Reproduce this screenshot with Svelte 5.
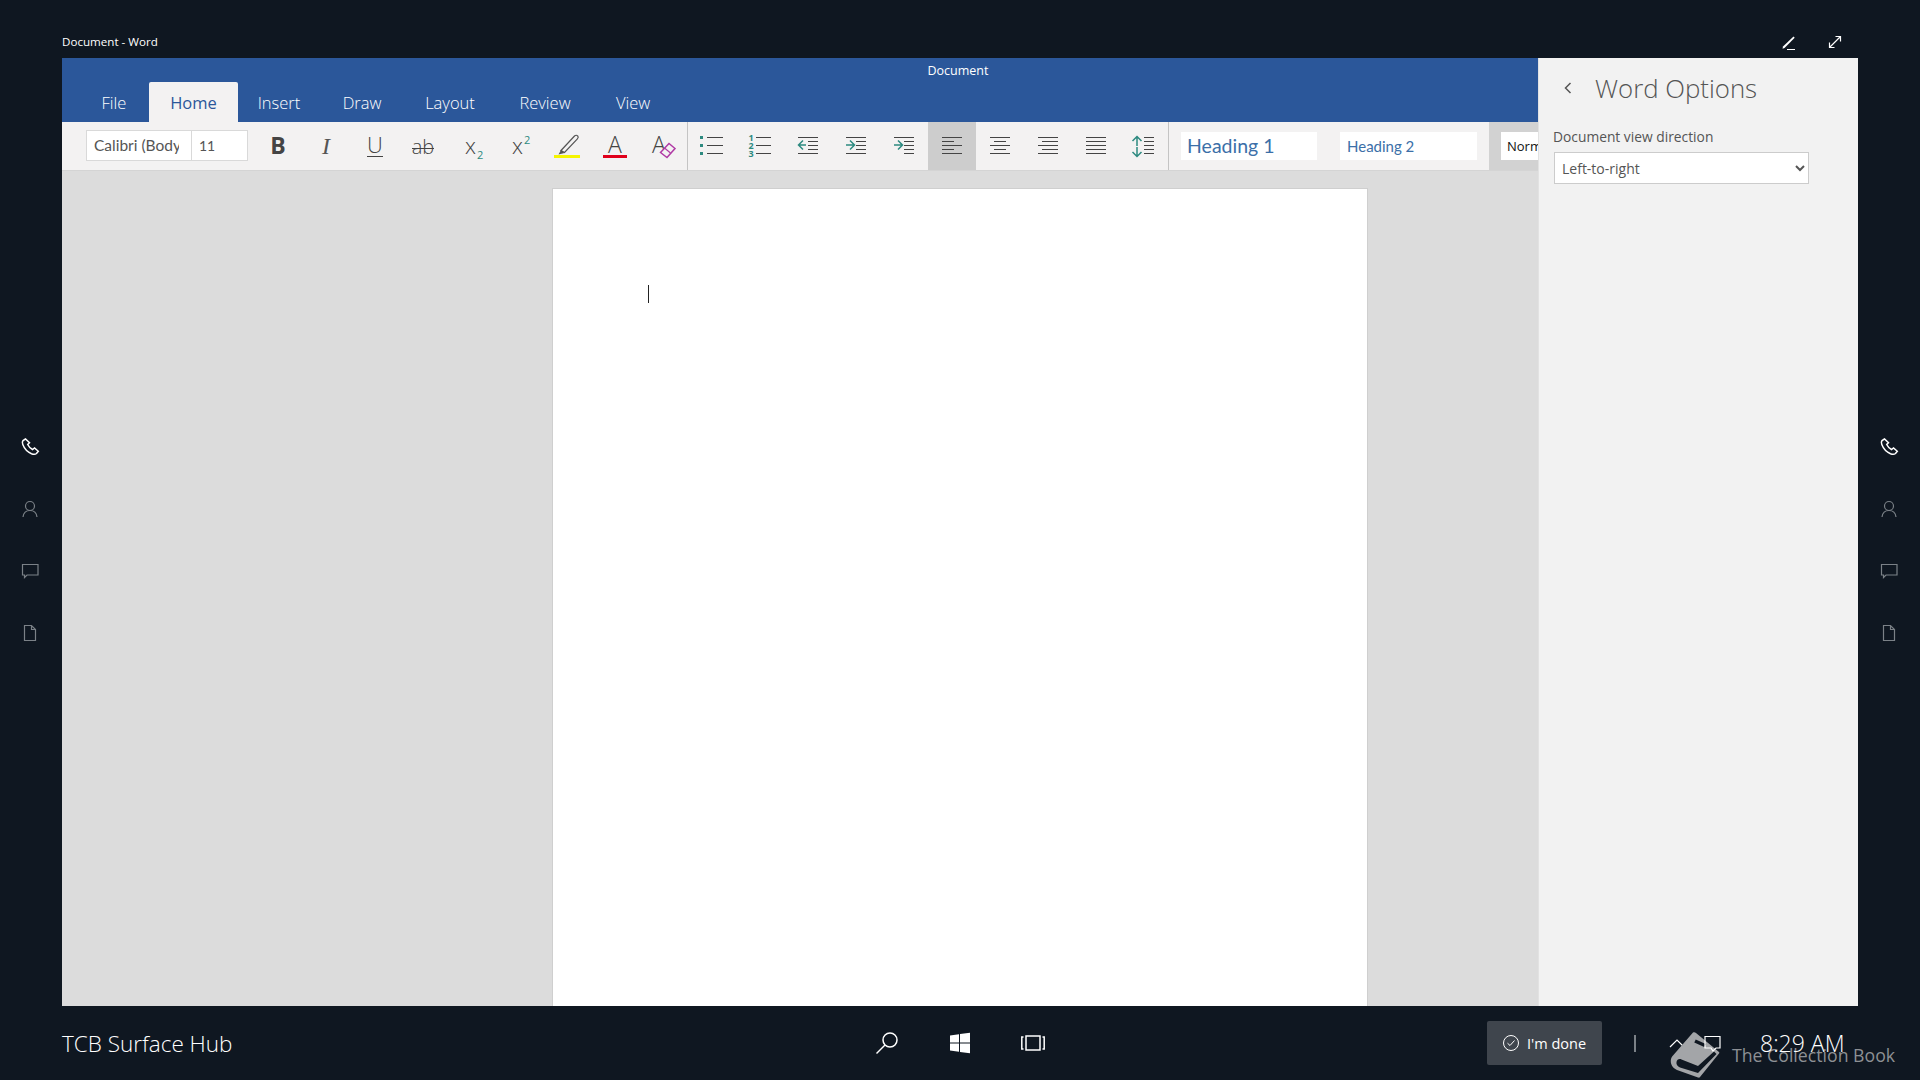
<script lang="ts">
	const tabs = [
		{ label: 'File', width: 64 },
		{ label: 'Home', width: 89 },
		{ label: 'Insert', width: 76 },
		{ label: 'Draw', width: 84 },
		{ label: 'Layout', width: 86 },
		{ label: 'Review', width: 98 },
		{ label: 'View', width: 72 }
	];
	const railIcons = ['phone', 'person', 'chat', 'doc'];

	// y rows of the five lines in paragraph icons, in a 48x48 cell
	const rows = [15, 19, 23, 27, 31];

	const paragraphIcons: { name: string; lines: number[][]; active?: boolean; marks?: string }[] = [
		{ name: 'outdent', lines: [[14, 34], [24, 34], [24, 34], [24, 34], [14, 34]], marks: 'M22 23H15M19 18.5 14.5 23l4.5 4.5' },
		{ name: 'indent', lines: [[14, 34], [24, 34], [24, 34], [24, 34], [14, 34]], marks: 'M14 23h8M18 18.5l4.5 4.5-4.5 4.5' },
		{ name: 'indent-more', lines: [[14, 34], [24, 34], [24, 34], [24, 34], [24, 34]], marks: 'M14 23h8M18 18.5l4.5 4.5-4.5 4.5' },
		{ name: 'left', active: true, lines: [[14, 34], [14, 26], [14, 34], [14, 26], [14, 34]] },
		{ name: 'center', lines: [[14, 34], [18, 30], [14, 34], [18, 30], [14, 34]] },
		{ name: 'right', lines: [[14, 34], [18, 34], [14, 34], [18, 34], [14, 34]] },
		{ name: 'justify', lines: [[14, 34], [14, 34], [14, 34], [14, 34], [14, 34]] }
	];
</script>

<div class="screen">
	<header class="topbar">
		<span class="doc-title">Document - Word</span>
		<div class="top-icons">
			<svg width="18" height="18" viewBox="0 0 18 18"><path d="M3 13.5 13.5 3.5l1.2 1.2L4.5 15l-2 .7z" fill="#fff" /><path d="M7 16.5h8" stroke="#fff" /></svg>
			<svg width="18" height="18" viewBox="0 0 18 18" fill="none" stroke="#fff" stroke-width="1.2"><path d="M3.5 14.5l11-11M9.5 3.5h5v5M3.5 9.5v5h5" /></svg>
		</div>
	</header>

	<div class="middle">
		{#snippet rail(side: string)}
			<nav class="rail {side}">
				{#each railIcons as icon}
					<svg class="rail-icon" class:on={icon === 'phone'} width="24" height="24" viewBox="0 0 24 24" fill="none" stroke="currentColor" stroke-width="1.2">
						{#if icon === 'phone'}
							<path d="M7.5 4 5 5.500c-.8 1-.8 2.500-.2 4 1.500 4 4.800 7.500 8.700 9.200 2 .8 3.800.8 5-.2l1.800-2.200-3.800-3.300-2 1.500c-2-1-3.800-3-4.800-5l1.800-1.800z" stroke-width="1.500" />
						{:else if icon === 'person'}
							<circle cx="12" cy="9" r="4.500" /><path d="M5 20c.5-4 3-6.500 7-6.500s6.500 2.500 7 6.500" />
						{:else if icon === 'chat'}
							<path d="M4.500 5.500h15.500v10.500H9l-2.500 2.500V16h-2z" />
						{:else}
							<path d="M6.500 4.500h7l4 4v11h-11zM13.500 4.500v4h4" />
						{/if}
					</svg>
				{/each}
			</nav>
		{/snippet}

		{@render rail('left')}

		<main class="window">
			<div class="app">
				<div class="ribbon">
					<div class="app-title">Document</div>
					<div class="tabs">
						{#each tabs as tab}
							<span class="tab" class:selected={tab.label === 'Home'} style="width: {tab.width}px">{tab.label}</span>
						{/each}
					</div>
				</div>

				<div class="toolbar">
					<div class="font-box">
						<span class="font-name"><span class="font-clip">Calibri (Body)</span></span>
						<span class="font-size">11</span>
					</div>

					<div class="tools">
						<svg class="cell" viewBox="0 0 48 48"><text class="t-bold" x="23" y="32" text-anchor="middle">B</text></svg>
						<svg class="cell" viewBox="0 0 48 48"><text class="t-italic" x="23" y="32" text-anchor="middle">I</text></svg>
						<svg class="cell" viewBox="0 0 48 48"><text class="t-plain" x="24" y="31" text-anchor="middle">U</text><path class="ln" d="M16 34.500h16" /></svg>
						<svg class="cell" viewBox="0 0 48 48"><text class="t-ab" x="24" y="32" text-anchor="middle">ab</text><path class="ln" d="M13 26.500h22" /></svg>
						<svg class="cell" viewBox="0 0 48 48"><text class="t-x" x="18" y="32">x</text><text class="t-sub" x="30" y="37">2</text></svg>
						<svg class="cell" viewBox="0 0 48 48"><text class="t-x" x="17" y="32">x</text><text class="t-sub" x="29" y="22">2</text></svg>
						<svg class="cell" viewBox="0 0 48 48">
							<g transform="translate(-3 0)">
								<path d="M21 28.500 34.500 14c1-1 2.500-1 3.200 0 .7.800.5 2-.3 2.800L24.500 30.500z" fill="#f3f2f2" stroke="#555" stroke-width="1.200" />
								<path d="M21 28 24.500 31l-6 1.500z" fill="#555" />
								<rect x="14" y="33" width="26" height="3" fill="#f5f500" />
							</g>
						</svg>
						<svg class="cell" viewBox="0 0 48 48"><text class="t-a" x="24" y="31" text-anchor="middle">A</text><rect x="12" y="33" width="24" height="3" fill="#e0001b" /></svg>
						<svg class="cell" viewBox="0 0 48 48">
							<g transform="translate(-1 0)">
								<text class="t-a" x="21" y="31" text-anchor="middle">A</text>
								<path d="M22.500 30.500 31 21.500l6 5-8 9z" fill="#f3f2f2" stroke="#b03aa5" stroke-width="1.500" />
								<path d="M26.500 26l6 5" stroke="#b03aa5" stroke-width="1.200" />
							</g>
						</svg>
					</div>

					<div class="rule"></div>

					<div class="tools">
						<svg class="cell" viewBox="0 0 48 48">
							{#each [15, 23, 31] as y}
								<rect x="12" y={y - 1} width="3" height="3" fill="#2d8a80" />
								<path class="ln" d="M19 {y}.5h16" />
							{/each}
						</svg>
						<svg class="cell" viewBox="0 0 48 48">
							{#each [1, 2, 3] as n, i}
								<text class="t-num" x="12.500" y={18.500 + i * 8}>{n}</text>
								<path class="ln" d="M20 {15 + i * 8}.5h15" />
							{/each}
						</svg>
						{#each paragraphIcons as icon}
							<svg class="cell" class:active={icon.active} viewBox="0 0 48 48">
								{#each icon.lines as [a, b], i}
									<path class="ln" d="M{a} {rows[i]}.5H{b}" />
								{/each}
								{#if icon.marks}
									<path d={icon.marks} fill="none" stroke="#2d8a80" stroke-width="1.500" />
								{/if}
							</svg>
						{/each}
						<svg class="cell" viewBox="0 0 48 48">
							{#each rows as y}
								<path class="ln" d="M24 {y}.5h10" />
							{/each}
							<path d="M17 15v9M12.500 19 17 14.500l4.500 4.500M17 25v9M12.500 30 17 34.500l4.500-4.500" fill="none" stroke="#2d8a80" stroke-width="1.500" />
						</svg>
					</div>

					<div class="rule"></div>

					<div class="styles">
						<span class="style h1">Heading 1</span>
						<span class="style h2">Heading 2</span>
						<div class="style-more"><span class="style norm">Normal</span></div>
					</div>
				</div>

				<div class="canvas">
					<div class="page"><div class="caret"></div></div>
				</div>
			</div>

			<aside class="panel">
				<div class="panel-head">
					<svg width="12" height="14" viewBox="0 0 12 14" fill="none" stroke="#555" stroke-width="1.500"><path d="M8.500 2 3.500 7l5 5" /></svg>
					<h1>Word Options</h1>
				</div>
				<label class="field">
					<span>Document view direction</span>
					<select>
						<option>Left-to-right</option>
					</select>
				</label>
			</aside>
		</main>

		{@render rail('right')}
	</div>

	<footer class="taskbar">
		<span class="hub-name">TCB Surface Hub</span>

		<div class="center-icons">
			<svg width="28" height="28" viewBox="0 0 28 28" fill="none" stroke="#fff" stroke-width="1.500"><circle cx="17" cy="11" r="7" /><path d="M12 16 3.500 24.500" /></svg>
			<svg width="28" height="28" viewBox="0 0 28 28" fill="#fff"><path d="M4 6.500 13 5.200v8.200H4zM14 5 24 3.800v9.600H14zM4 14.500h9v8.300L4 21.500zM14 14.500h10v9.700L14 23z" /></svg>
			<svg width="28" height="28" viewBox="0 0 28 28" fill="none" stroke="#fff" stroke-width="1.500"><rect x="7" y="7" width="14" height="14" /><path d="M4.500 8H2.800v12h1.700M23.500 8h1.700v12h-1.700" /></svg>
		</div>

		<div class="tray">
			<button class="done">
				<svg width="18" height="18" viewBox="0 0 18 18" fill="none" stroke="#fff" stroke-width="1"><circle cx="9" cy="9" r="7.500" /><path d="M5.500 9.200 8 11.500l4.500-5" /></svg>
				I'm done
			</button>
			<span class="bar"></span>
			<svg class="caret-up" width="20" height="12" viewBox="0 0 20 12" fill="none" stroke="#fff" stroke-width="1.200"><path d="M3 10l7-7 7 7" /></svg>
			<svg class="msg" width="17" height="17" viewBox="0 0 17 17" fill="none" stroke="#fff" stroke-width="1.200"><path d="M1 1.500h15v11.500h-4l-3 3-2-3H1z" /></svg>
			<span class="clock">8:29 AM</span>
		</div>
	</footer>

	<div class="watermark">
		<svg width="52" height="48" viewBox="0 0 52 48">
			<path d="M24 1.500C25 1 26 1 27 2L50 21c.5.500.5 1 0 1.500L31 46c-.5.700-1 .8-2 .5L8 39c-5-2-7-7-6-11 .5-1.500 1-2.500 2-3.500z" fill="#a3a5a8" />
			<path d="M7.500 31c.5-2.500 2.500-3.500 5-2.500L29 35 45 20.500l2.500 2.500L29 42 11 36.500C8.500 35.500 7 33.500 7.500 31z" fill="#0f1721" />
			<path d="M26 10l10 4.500" stroke="#0f1721" stroke-width="3.500" />
		</svg>
		<span>The Collection Book</span>
	</div>
</div>

<style>
	:global(body) {
		margin: 0;
		background: #0f1721;
	}

	.screen {
		position: relative;
		width: 1920px;
		height: 1080px;
		display: flex;
		flex-direction: column;
		overflow: hidden;
		background: #0f1721;
		color: #fff;
		font-family: "Open Sans", "Noto Sans", sans-serif;
	}

	.topbar {
		height: 58px;
		flex: none;
		display: flex;
		align-items: center;
		justify-content: space-between;
		padding: 25px 76px 0 62px;
		box-sizing: border-box;
	}

	.doc-title {
		font-size: 11.600px;
	}

	.top-icons {
		display: flex;
		gap: 28px;
	}

	.middle {
		flex: 1;
		min-height: 0;
		display: flex;
	}

	.rail {
		width: 62px;
		flex: none;
		display: flex;
		flex-direction: column;
		align-items: center;
		gap: 38px;
		padding-top: 377px;
		box-sizing: border-box;
		color: #7b8187;
	}

	.rail.left {
		padding-right: 2px;
	}

	.rail-icon.on {
		color: #fff;
	}

	.window {
		flex: 1;
		min-width: 0;
		display: flex;
	}

	.app {
		width: 1476px;
		flex: none;
		display: flex;
		flex-direction: column;
	}

	.ribbon {
		height: 64px;
		flex: none;
		background: #2b579a;
	}

	.app-title {
		height: 24px;
		padding-left: 316px;
		text-align: center;
		font-size: 12.500px;
		line-height: 25px;
	}

	.tabs {
		display: flex;
		gap: 3px;
		padding-left: 20px;
	}

	.tab {
		height: 40px;
		text-align: center;
		font-size: 16.500px;
		font-weight: 300;
		line-height: 41px;
		border-radius: 2px 2px 0 0;
	}

	.tab.selected {
		background: #f3f2f2;
		color: #2b579a;
		font-weight: 400;
	}

	.toolbar {
		height: 48px;
		flex: none;
		display: flex;
		align-items: stretch;
		padding-left: 24px;
		background: #f3f2f2;
		border-bottom: 1px solid #d4d4d4;
		overflow: hidden;
	}

	.font-box {
		display: flex;
		width: 162px;
		height: 31px;
		margin: 8px 7px 0 0;
		flex: none;
		box-sizing: border-box;
		background: #fff;
		border: 1px solid #d9d9d9;
		color: #555;
		font-size: 15.500px;
		line-height: 29px;
	}

	.font-name {
		width: 105px;
		flex: none;
		padding-left: 7px;
		box-sizing: border-box;
		border-right: 1px solid #d9d9d9;
		font-family: "Lato", sans-serif;
	}

	.font-clip {
		display: block;
		width: 85px;
		overflow: hidden;
		white-space: nowrap;
	}

	.font-size {
		padding-left: 7px;
		font-family: "Lato", sans-serif;
		font-size: 14px;
	}

	.tools {
		display: flex;
		flex: none;
	}

	.cell {
		width: 48px;
		height: 48px;
		display: block;
		flex: none;
	}

	.cell.active {
		background: #cdcdcd;
	}

	.ln {
		stroke: #444;
		stroke-width: 1;
		fill: none;
	}

	.t-bold {
		font: 700 23px "Open Sans", sans-serif;
		fill: #444;
	}

	.t-italic {
		font: italic 400 24px "Liberation Serif", serif;
		fill: #555;
	}

	.t-plain {
		font: 300 22px "Open Sans", sans-serif;
		fill: #444;
	}

	.t-ab {
		font: 300 20px "Open Sans", sans-serif;
		fill: #444;
	}

	.t-x {
		font: 300 22px "Open Sans", sans-serif;
		fill: #444;
	}

	.t-sub {
		font: 400 11px "Open Sans", sans-serif;
		fill: #2d8a80;
	}

	.t-a {
		font: 300 23px "Open Sans", sans-serif;
		fill: #444;
	}

	.t-num {
		font: 700 9px "Open Sans", sans-serif;
		fill: #2d8a80;
	}

	.rule {
		width: 1px;
		flex: none;
		background: #c4c4c4;
	}

	.styles {
		display: flex;
		flex: 1;
		min-width: 0;
		padding-left: 12px;
		align-items: flex-start;
		overflow: hidden;
	}

	.style {
		height: 28px;
		margin-top: 10px;
		box-sizing: border-box;
		background: #fff;
		padding-left: 6px;
		white-space: nowrap;
		font-family: "Lato", sans-serif;
		line-height: 28px;
		flex: none;
	}

	.h1 {
		width: 136px;
		color: #3b6fa8;
		font-size: 19.500px;
	}

	.h2 {
		width: 137px;
		margin-left: 23px;
		padding-left: 7px;
		color: #3b6fa8;
		font-size: 15px;
	}

	.style-more {
		height: 48px;
		width: 49px;
		margin-left: 12px;
		padding-left: 12px;
		box-sizing: border-box;
		background: #d2d2d2;
		flex: none;
		overflow: hidden;
	}

	.norm {
		display: block;
		width: 60px;
		color: #111;
		font: 500 13px/28px "Open Sans", sans-serif;
		padding-left: 6px;
	}

	.canvas {
		flex: 1;
		min-height: 0;
		overflow: hidden;
		padding: 17px 0 0 490px;
		background: #dcdcdc;
	}

	.page {
		width: 816px;
		height: 1000px;
		box-sizing: border-box;
		padding: 96px 0 0 95px;
		background: #fff;
		border: 1px solid #cfcfcf;
	}

	.caret {
		width: 1px;
		height: 18px;
		background: #222;
	}

	.panel {
		flex: 1;
		background: #f2f2f2;
		border-left: 1px solid #e2e2e2;
		color: #555;
		padding: 0 0 0 14px;
	}

	.panel-head {
		display: flex;
		align-items: center;
		gap: 21px;
		height: 60px;
		padding-left: 9px;
	}

	.panel-head h1 {
		margin: 0;
		font-size: 25.800px;
		font-weight: 300;
		color: #555;
	}

	.field {
		display: flex;
		flex-direction: column;
		gap: 6px;
		margin-top: 9px;
		font-size: 13.800px;
	}

	.field select {
		width: 255px;
		height: 32px;
		margin-left: 1px;
		padding-left: 3px;
		background: #fff;
		border: 1px solid #ccc;
		border-radius: 0;
		color: #555;
		font: 14px "Open Sans", sans-serif;
	}

	.taskbar {
		height: 74px;
		flex: none;
		display: grid;
		grid-template-columns: 1fr auto 1fr;
		align-items: center;
		padding-left: 62px;
	}

	.hub-name {
		font-size: 22.500px;
		font-weight: 300;
	}

	.center-icons {
		display: flex;
		margin-left: -62px;
		gap: 45px;
	}

	.tray {
		display: flex;
		align-items: center;
		justify-self: end;
		padding-right: 75px;
	}

	.done {
		display: flex;
		align-items: center;
		gap: 7px;
		width: 115px;
		height: 44px;
		padding: 0 0 0 15px;
		box-sizing: border-box;
		background: #3f454d;
		border: 0;
		border-radius: 2px;
		color: #fff;
		font: 14.500px "Open Sans", sans-serif;
	}

	.bar {
		width: 2px;
		height: 17px;
		margin: 0 31px 0 32px;
		background: #7b8187;
	}

	.msg {
		position: relative;
		z-index: 2;
		margin-left: 17px;
	}

	.clock {
		position: relative;
		z-index: 2;
		width: 85px;
		margin-left: 39px;
		font-size: 23px;
		font-weight: 300;
		white-space: nowrap;
	}

	.watermark {
		position: absolute;
		left: 1669px;
		top: 1031px;
		display: flex;
		align-items: flex-start;
		gap: 11px;
		color: #8d9094;
		font-size: 17.700px;
		white-space: nowrap;
	}

	.watermark span {
		margin-top: 12px;
	}
</style>
